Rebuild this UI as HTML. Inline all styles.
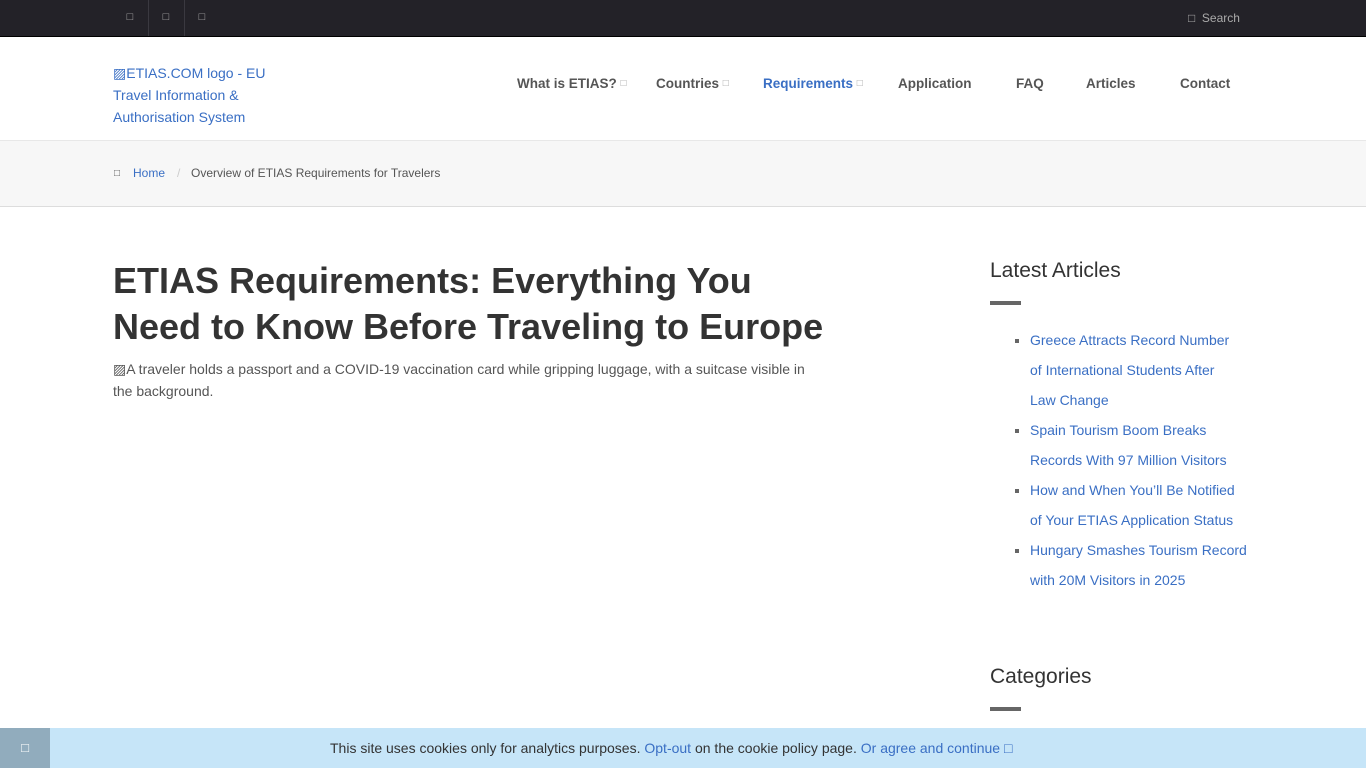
<!DOCTYPE html>
<html><head><meta charset="utf-8"><style>
*{margin:0;padding:0;box-sizing:border-box}
body{width:1366px;height:768px;overflow:hidden;font-family:"Liberation Sans",sans-serif;background:#fff;color:#333;position:relative}
a{color:#3a6fc4;text-decoration:none}
.top{height:37px;background:#232228;border-bottom:1px solid #000;position:relative}
.top .ic{position:absolute;top:0;width:36px;height:36px;color:#aaa;font-size:11px;text-align:center;line-height:34px}
.top .sep{position:absolute;top:0;width:1px;height:36px;background:#3a3940}
.search{position:absolute;left:1188px;top:11px;color:#aaa;font-size:12px}
.hdr{height:104px;position:relative;border-bottom:1px solid #e8e8e8}
.logo{position:absolute;left:113px;top:25px;width:165px;font-size:14px;line-height:22px;color:#3a6fc4}
.nav{position:absolute;left:0;top:39px;font-size:13.5px;font-weight:bold;color:#555}
.nav span{position:absolute;white-space:nowrap}
.nav i{font-style:normal;font-weight:normal;color:#aaa;font-size:10px;vertical-align:2px}
.bc{height:66px;background:#f7f7f7;border-bottom:1px solid #ddd;position:relative;font-size:12px;color:#555}
.bc div{position:absolute;top:25px}
h1{position:absolute;left:113px;top:258px;font-size:36px;line-height:46px;font-weight:bold;color:#333;white-space:nowrap}
.alt{position:absolute;left:113px;top:358px;white-space:nowrap;font-size:14px;line-height:22px;color:#555}
.side{position:absolute;left:990px;top:259px;width:280px}
.side h3{font-size:21px;font-weight:normal;color:#333;height:34px}
.bar{width:31px;height:4px;background:#666;margin-top:8px}
.side ul{margin:20px 0 0 40px;list-style:square;color:#666}
.side li{font-size:14px;line-height:30px;padding-left:0;white-space:nowrap}
.cookie{position:absolute;left:0;top:728px;width:1366px;height:40px;background:#c6e5f8;font-size:14px;color:#333;line-height:40px}
.cookie .x{position:absolute;left:0;top:0;width:50px;height:40px;background:#91acbd;color:#fff;text-align:center;font-size:13px}
.cookie .t{position:absolute;left:330px;top:0;white-space:nowrap}
</style></head><body>
<div class="top">
<div class="ic" style="left:112px">□</div><div class="sep" style="left:148px"></div>
<div class="ic" style="left:148px">□</div><div class="sep" style="left:184px"></div>
<div class="ic" style="left:184px">□</div>
<div class="search">□&nbsp; Search</div>
</div>
<div class="hdr">
<div class="logo">▨ETIAS.COM logo - EU Travel Information &amp; Authorisation System</div>
<div class="nav">
<span style="left:517px">What is ETIAS? <i>□</i></span>
<span style="left:656px">Countries <i>□</i></span>
<span style="left:763px;color:#3a6fc4">Requirements <i>□</i></span>
<span style="left:898px">Application</span>
<span style="left:1016px">FAQ</span>
<span style="left:1086px">Articles</span>
<span style="left:1180px">Contact</span>
</div>
</div>
<div class="bc">
<div style="left:114px;font-size:10px;top:27px">□</div>
<div style="left:133px"><a href="#">Home</a></div>
<div style="left:177px;color:#ccc">/</div>
<div style="left:191px">Overview of ETIAS Requirements for Travelers</div>
</div>
<h1>ETIAS Requirements: Everything You<br>Need to Know Before Traveling to Europe</h1>
<div class="alt">▨A traveler holds a passport and a COVID-19 vaccination card while gripping luggage, with a suitcase visible in<br>the background.</div>
<div class="side">
<h3>Latest Articles</h3><div class="bar"></div>
<ul>
<li><a href="#">Greece Attracts Record Number<br>of International Students After<br>Law Change</a></li>
<li><a href="#">Spain Tourism Boom Breaks<br>Records With 97 Million Visitors</a></li>
<li><a href="#">How and When You’ll Be Notified<br>of Your ETIAS Application Status</a></li>
<li><a href="#">Hungary Smashes Tourism Record<br>with 20M Visitors in 2025</a></li>
</ul>
</div>
<div class="side" style="top:665px"><h3>Categories</h3><div class="bar"></div></div>
<div class="cookie"><div class="x">□</div>
<div class="t">This site uses cookies only for analytics purposes. <a href="#">Opt-out</a> on the cookie policy page. <a href="#">Or agree and continue □</a></div></div>
</body></html>
